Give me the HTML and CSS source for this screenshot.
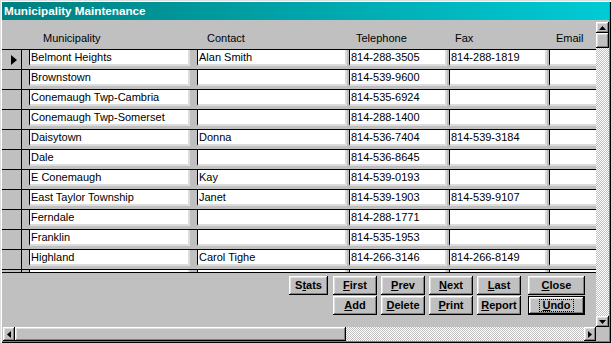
FILE: index.html
```html
<!DOCTYPE html>
<html>
<head>
<meta charset="utf-8">
<title>Municipality Maintenance</title>
<link rel="stylesheet" href="styles.css">
</head>
<body>
<div class="window">
  <div class="titlebar">Municipality Maintenance</div>
  <div class="client">
    <div class="main">
      <div class="form">
        <div class="header">
          <div class="sel-space"></div>
          <div class="c1 h1">Municipality</div>
          <div class="c2 h2">Contact</div>
          <div class="c3 h3">Telephone</div>
          <div class="c4 h4">Fax</div>
          <div class="c5 h5">Email</div>
        </div>
        <div class="rows">
          <div class="row">
            <div class="sel"><svg width="6" height="10" viewBox="0 0 6 10"><polygon points="0,0 6,5 0,10" fill="#000"/></svg></div>
            <div class="cell c1">Belmont Heights</div>
            <div class="cell c2">Alan Smith</div>
            <div class="cell c3">814-288-3505</div>
            <div class="cell c4">814-288-1819</div>
            <div class="cell c5"></div>
          </div>
          <div class="row">
            <div class="sel"></div>
            <div class="cell c1">Brownstown</div>
            <div class="cell c2"></div>
            <div class="cell c3">814-539-9600</div>
            <div class="cell c4"></div>
            <div class="cell c5"></div>
          </div>
          <div class="row">
            <div class="sel"></div>
            <div class="cell c1">Conemaugh Twp-Cambria</div>
            <div class="cell c2"></div>
            <div class="cell c3">814-535-6924</div>
            <div class="cell c4"></div>
            <div class="cell c5"></div>
          </div>
          <div class="row">
            <div class="sel"></div>
            <div class="cell c1">Conemaugh Twp-Somerset</div>
            <div class="cell c2"></div>
            <div class="cell c3">814-288-1400</div>
            <div class="cell c4"></div>
            <div class="cell c5"></div>
          </div>
          <div class="row">
            <div class="sel"></div>
            <div class="cell c1">Daisytown</div>
            <div class="cell c2">Donna</div>
            <div class="cell c3">814-536-7404</div>
            <div class="cell c4">814-539-3184</div>
            <div class="cell c5"></div>
          </div>
          <div class="row">
            <div class="sel"></div>
            <div class="cell c1">Dale</div>
            <div class="cell c2"></div>
            <div class="cell c3">814-536-8645</div>
            <div class="cell c4"></div>
            <div class="cell c5"></div>
          </div>
          <div class="row">
            <div class="sel"></div>
            <div class="cell c1">E Conemaugh</div>
            <div class="cell c2">Kay</div>
            <div class="cell c3">814-539-0193</div>
            <div class="cell c4"></div>
            <div class="cell c5"></div>
          </div>
          <div class="row">
            <div class="sel"></div>
            <div class="cell c1">East Taylor Township</div>
            <div class="cell c2">Janet</div>
            <div class="cell c3">814-539-1903</div>
            <div class="cell c4">814-539-9107</div>
            <div class="cell c5"></div>
          </div>
          <div class="row">
            <div class="sel"></div>
            <div class="cell c1">Ferndale</div>
            <div class="cell c2"></div>
            <div class="cell c3">814-288-1771</div>
            <div class="cell c4"></div>
            <div class="cell c5"></div>
          </div>
          <div class="row">
            <div class="sel"></div>
            <div class="cell c1">Franklin</div>
            <div class="cell c2"></div>
            <div class="cell c3">814-535-1953</div>
            <div class="cell c4"></div>
            <div class="cell c5"></div>
          </div>
          <div class="row">
            <div class="sel"></div>
            <div class="cell c1">Highland</div>
            <div class="cell c2">Carol Tighe</div>
            <div class="cell c3">814-266-3146</div>
            <div class="cell c4">814-266-8149</div>
            <div class="cell c5"></div>
          </div>
          <div class="row">
            <div class="sel"></div>
            <div class="cell c1"></div>
            <div class="cell c2"></div>
            <div class="cell c3"></div>
            <div class="cell c4"></div>
            <div class="cell c5"></div>
          </div>
        </div>
        <div class="footer">
          <div class="buttons">
            <button class="btn stats">S<u>t</u>ats</button>
            <button class="btn"><u>F</u>irst</button>
            <button class="btn"><u>P</u>rev</button>
            <button class="btn"><u>N</u>ext</button>
            <button class="btn"><u>L</u>ast</button>
            <button class="btn close"><u>C</u>lose</button>
            <button class="btn add"><u>A</u>dd</button>
            <button class="btn"><u>D</u>elete</button>
            <button class="btn"><u>P</u>rint</button>
            <button class="btn"><u>R</u>eport</button>
            <button class="btn close default"><span class="focus"><u>U</u>ndo</span></button>
          </div>
        </div>
      </div>
      <div class="vscroll">
        <div class="sbtn vbtn"><svg width="7" height="4" viewBox="0 0 7 4"><polygon points="3.5,0 7,4 0,4" fill="#000"/></svg></div>
        <div class="vthumb"></div>
        <div class="track"></div>
        <div class="sbtn vbtn"><svg width="7" height="4" viewBox="0 0 7 4"><polygon points="0,0 7,0 3.5,4" fill="#000"/></svg></div>
      </div>
    </div>
    <div class="bottom">
      <div class="hscroll">
        <div class="sbtn hbtn"><svg width="4" height="7" viewBox="0 0 4 7"><polygon points="4,0 4,7 0,3.5" fill="#000"/></svg></div>
        <div class="hthumb"></div>
        <div class="track"></div>
        <div class="sbtn hbtn"><svg width="4" height="7" viewBox="0 0 4 7"><polygon points="0,0 4,3.5 0,7" fill="#000"/></svg></div>
      </div>
      <div class="corner"></div>
    </div>
  </div>
</div>
</body>
</html>
```

FILE: styles.css
```css
* { box-sizing: border-box; }
html, body { margin: 0; padding: 0; }
body {
  font-family: "Liberation Sans", Arial, sans-serif;
  font-size: 11px;
  color: #000;
  background: #c0c0c0;
}
.window {
  width: 611px;
  height: 343px;
  padding: 2px;
  background: #c0c0c0;
  box-shadow: inset 1px 1px #dfdfdf, inset 2px 2px #fff, inset -1px -1px #000, inset -2px -2px #808080;
  display: flex;
  flex-direction: column;
  overflow: hidden;
}
.titlebar {
  height: 18px;
  flex: none;
  background: linear-gradient(90deg, #008080, #00cbd6);
  color: #fff;
  font-weight: bold;
  font-size: 11.7px;
  line-height: 18px;
  padding-left: 2px;
  white-space: nowrap;
}
.client { flex: 1; display: flex; flex-direction: column; }
.main { height: 307px; flex: none; display: flex; }
.form { width: 594px; flex: none; display: flex; flex-direction: column; overflow: hidden; }

.header { height: 29px; flex: none; display: flex; padding-top: 11px; line-height: 14px; white-space: nowrap; }
.sel-space { width: 20px; flex: none; }
.c1 { width: 161px; margin-left: 7px; flex: none; }
.c2 { width: 150px; margin-left: 7px; flex: none; }
.c3 { width: 98px; margin-left: 2px; flex: none; }
.c4 { width: 98px; margin-left: 2px; flex: none; }
.c5 { width: 60px; margin-left: 2px; flex: none; }
.h1 { padding-left: 14px; }
.h2 { padding-left: 10px; }
.h3 { padding-left: 7px; }
.h4 { padding-left: 6px; }
.h5 { padding-left: 7px; }

.rows { height: 223px; flex: none; overflow: hidden; }
.row { height: 20px; border-top: 1px solid #000; display: flex; align-items: flex-start; }
.sel {
  width: 20px; height: 19px; flex: none;
  border-right: 1px solid #000;
  display: flex; align-items: center; padding-left: 9px;
}
.cell {
  height: 16px;
  background: #fff;
  border-left: 1px solid #000;
  border-right: 2px solid #dcdcdc;
  border-bottom: 2px solid #dcdcdc;
  padding-left: 1px;
  line-height: 14px;
  white-space: nowrap;
  overflow: hidden;
}

.footer { flex: 1; border-top: 1px solid #000; padding: 3px 0 0 287px; }
.buttons {
  display: grid;
  grid-template-columns: 40px 44px 44px 44px 44px 60px;
  grid-template-rows: 19px 19px;
  column-gap: 4px;
  row-gap: 1px;
}
.btn {
  font-family: "Liberation Sans", Arial, sans-serif;
  font-size: 11px;
  font-weight: bold;
  color: #000;
  background: #c0c0c0;
  border: none;
  padding: 0;
  margin: 0;
  height: 19px;
  box-shadow: inset -1px -1px #000, inset 1px 1px #fff, inset -2px -2px #808080, inset 2px 2px #dfdfdf;
  display: flex; align-items: center; justify-content: center;
  line-height: 13px;
}
.stats { width: 39px; }
.close { width: 57px; justify-self: end; }
.add { grid-column: 2; }
.default {
  border: 1px solid #000;
  box-shadow: inset -1px -1px #000, inset 1px 1px #fff, inset -2px -2px #808080, inset 2px 2px #dfdfdf;
}
.focus { outline: 1px dotted #000; outline-offset: 0; padding: 0 2px; line-height: 11px; }

.vscroll { width: 13px; flex: none; display: flex; flex-direction: column; padding-top: 2px; }
.sbtn {
  background: #c0c0c0;
  box-shadow: inset -1px -1px #000, inset 1px 1px #fff, inset -2px -2px #808080, inset 2px 2px #dfdfdf;
  display: flex; align-items: center; justify-content: center;
  flex: none;
}
.vbtn { height: 11px; }
.vthumb {
  height: 15px; flex: none; background: #c0c0c0;
  box-shadow: inset -1px -1px #000, inset 1px 1px #fff, inset -2px -2px #808080, inset 2px 2px #dfdfdf;
}
.track { flex: 1; background: repeating-conic-gradient(#c0c0c0 0 25%, #fff 0 50%) 0 0 / 2px 2px; }

.bottom { height: 14px; flex: none; display: flex; }
.hscroll { width: 594px; flex: none; display: flex; padding-left: 1px; }
.hbtn { width: 12px; }
.hthumb {
  width: 331px; flex: none; background: #c0c0c0;
  box-shadow: inset -1px -1px #000, inset 1px 1px #fff, inset -2px -2px #808080, inset 2px 2px #dfdfdf;
}
.corner { flex: 1; background: #c0c0c0; }
```
